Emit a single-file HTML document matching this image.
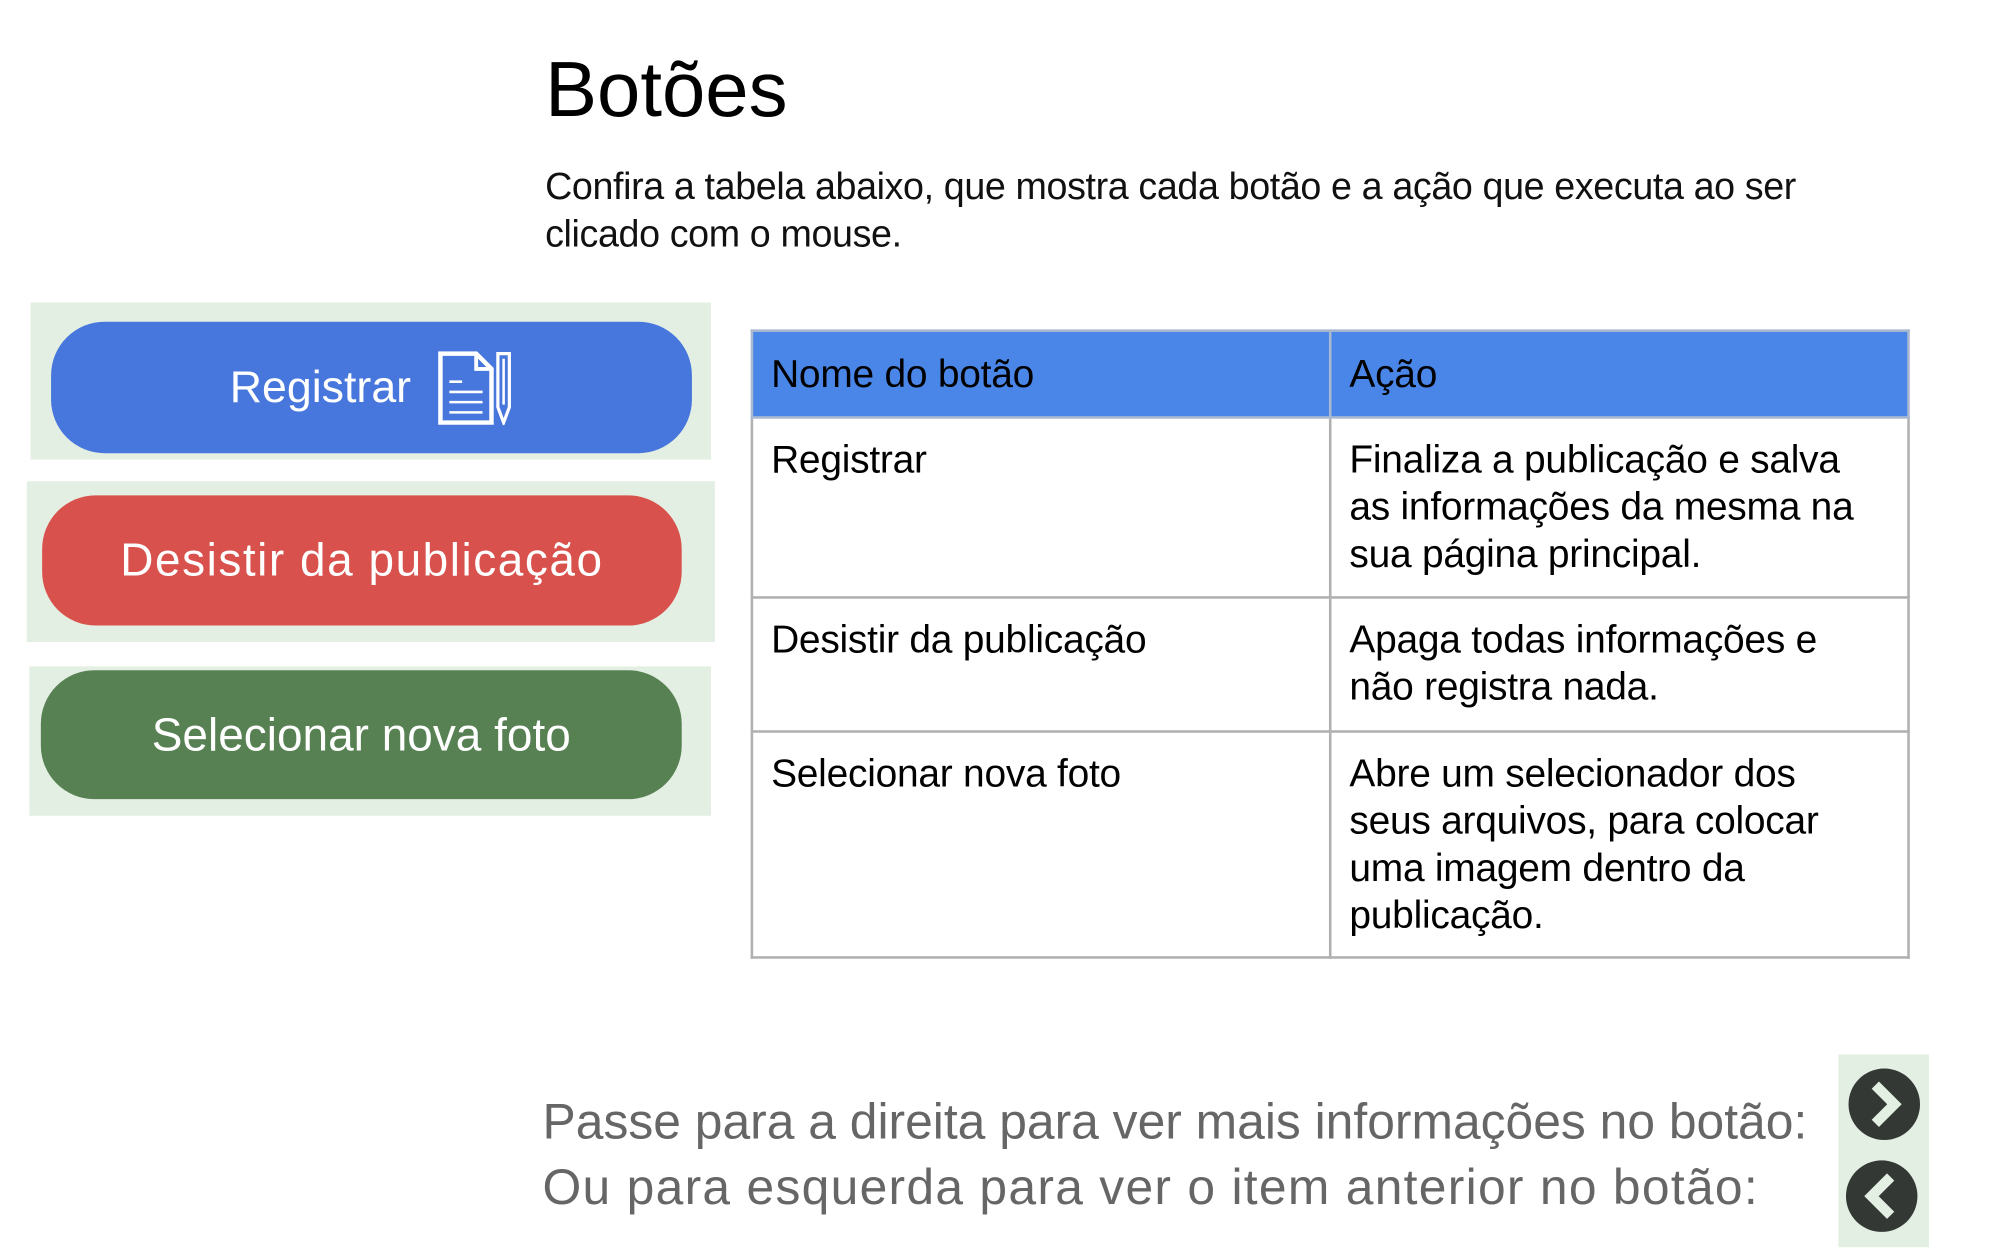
<!DOCTYPE html>
<html><head><meta charset="utf-8"><style>
html,body{margin:0;padding:0;background:#fff;width:2000px;height:1250px;overflow:hidden}
#w{position:absolute;left:0;top:0;width:1567px;height:980px;transform:scale(1.2766);transform-origin:0 0;font-family:"Liberation Sans",Arial,sans-serif}
.a{position:absolute}
h1{position:absolute;left:427px;top:34px;margin:0;font-weight:400;font-size:61px;line-height:72px;color:#000}
.p{left:427px;top:128px;font-size:29.5px;line-height:37px;color:#111;letter-spacing:-0.3px}
.pan{background:#e3efe3}
.btn{color:#fff;border-radius:42px;display:flex;align-items:center;justify-content:center}
table{position:absolute;left:588px;top:258px;width:908px;border-collapse:collapse;font-size:30.5px;line-height:37px;letter-spacing:-0.2px}
td{border:2px solid #b0b0b0;vertical-align:top;padding:14px 14px 0 14px;width:50%}
td+td{padding-right:30px}
tr.h td{background:#4a86e8;height:66px;vertical-align:middle;padding-top:0;border-color:#a9b8cf}
.bt{left:425px;font-size:39px;color:#666;line-height:50px}
</style></head><body><div id="w">
<h1>Botões</h1>
<div class="a p">Confira a tabela abaixo, que mostra cada botão e a ação que executa ao ser<br>clicado com o mouse.</div>

<div class="a pan" style="left:24px;top:237px;width:533px;height:123px"></div>
<div class="a btn" style="left:40px;top:252px;width:502px;height:103px;background:#4776dc;font-size:35px">
<span style="margin-right:20px">Registrar</span>
<svg width="60" height="58" viewBox="0 0 60 58"><path d="M3 2h28l12 12v42H3z" fill="none" stroke="#fff" stroke-width="3.5"/><path d="M31 2v12h12" fill="none" stroke="#fff" stroke-width="3"/><path d="M10 24h10M10 32h26M10 40h26M10 48h26" stroke="#fff" stroke-width="2"/><path d="M48 2h9v42l-4.5 12L48 44z" fill="none" stroke="#fff" stroke-width="2.5"/><path d="M52.5 6v36" stroke="#fff" stroke-width="2"/></svg>
</div>

<div class="a pan" style="left:21px;top:377px;width:539px;height:126px"></div>
<div class="a btn" style="left:33px;top:388px;width:501px;height:102px;background:#d9514c;font-size:36px;letter-spacing:1.2px">Desistir da publicação</div>

<div class="a pan" style="left:23px;top:522px;width:534px;height:117px"></div>
<div class="a btn" style="left:32px;top:525px;width:502px;height:101px;background:#588153;font-size:36px">Selecionar nova foto</div>

<table>
<tr class="h"><td>Nome do botão</td><td>Ação</td></tr>
<tr style="height:141px"><td>Registrar</td><td>Finaliza a publicação e salva as informações da mesma na sua página principal.</td></tr>
<tr style="height:105px"><td>Desistir da publicação</td><td>Apaga todas informações e não registra nada.</td></tr>
<tr style="height:177px"><td>Selecionar nova foto</td><td>Abre um selecionador dos seus arquivos, para colocar uma imagem dentro da publicação.</td></tr>
</table>

<div class="a bt" style="top:855px">Passe para a direita para ver mais informações no botão:</div>
<div class="a bt" style="top:906px;letter-spacing:1px">Ou para esquerda para ver o item anterior no botão:</div>
<div class="a" style="left:1440px;top:826px;width:71px;height:151px;background:#e3efe3"></div>
<svg class="a" style="left:1440px;top:826px" width="71" height="151" viewBox="0 0 71 151">
<circle cx="36" cy="39" r="28" fill="#333835"/><path d="M29 24l15 15-15 15" fill="none" stroke="#e3efe3" stroke-width="8"/>
<circle cx="34" cy="111" r="28" fill="#333835"/><path d="M41 96l-15 15 15 15" fill="none" stroke="#e3efe3" stroke-width="8"/>
</svg>
</div></body></html>
